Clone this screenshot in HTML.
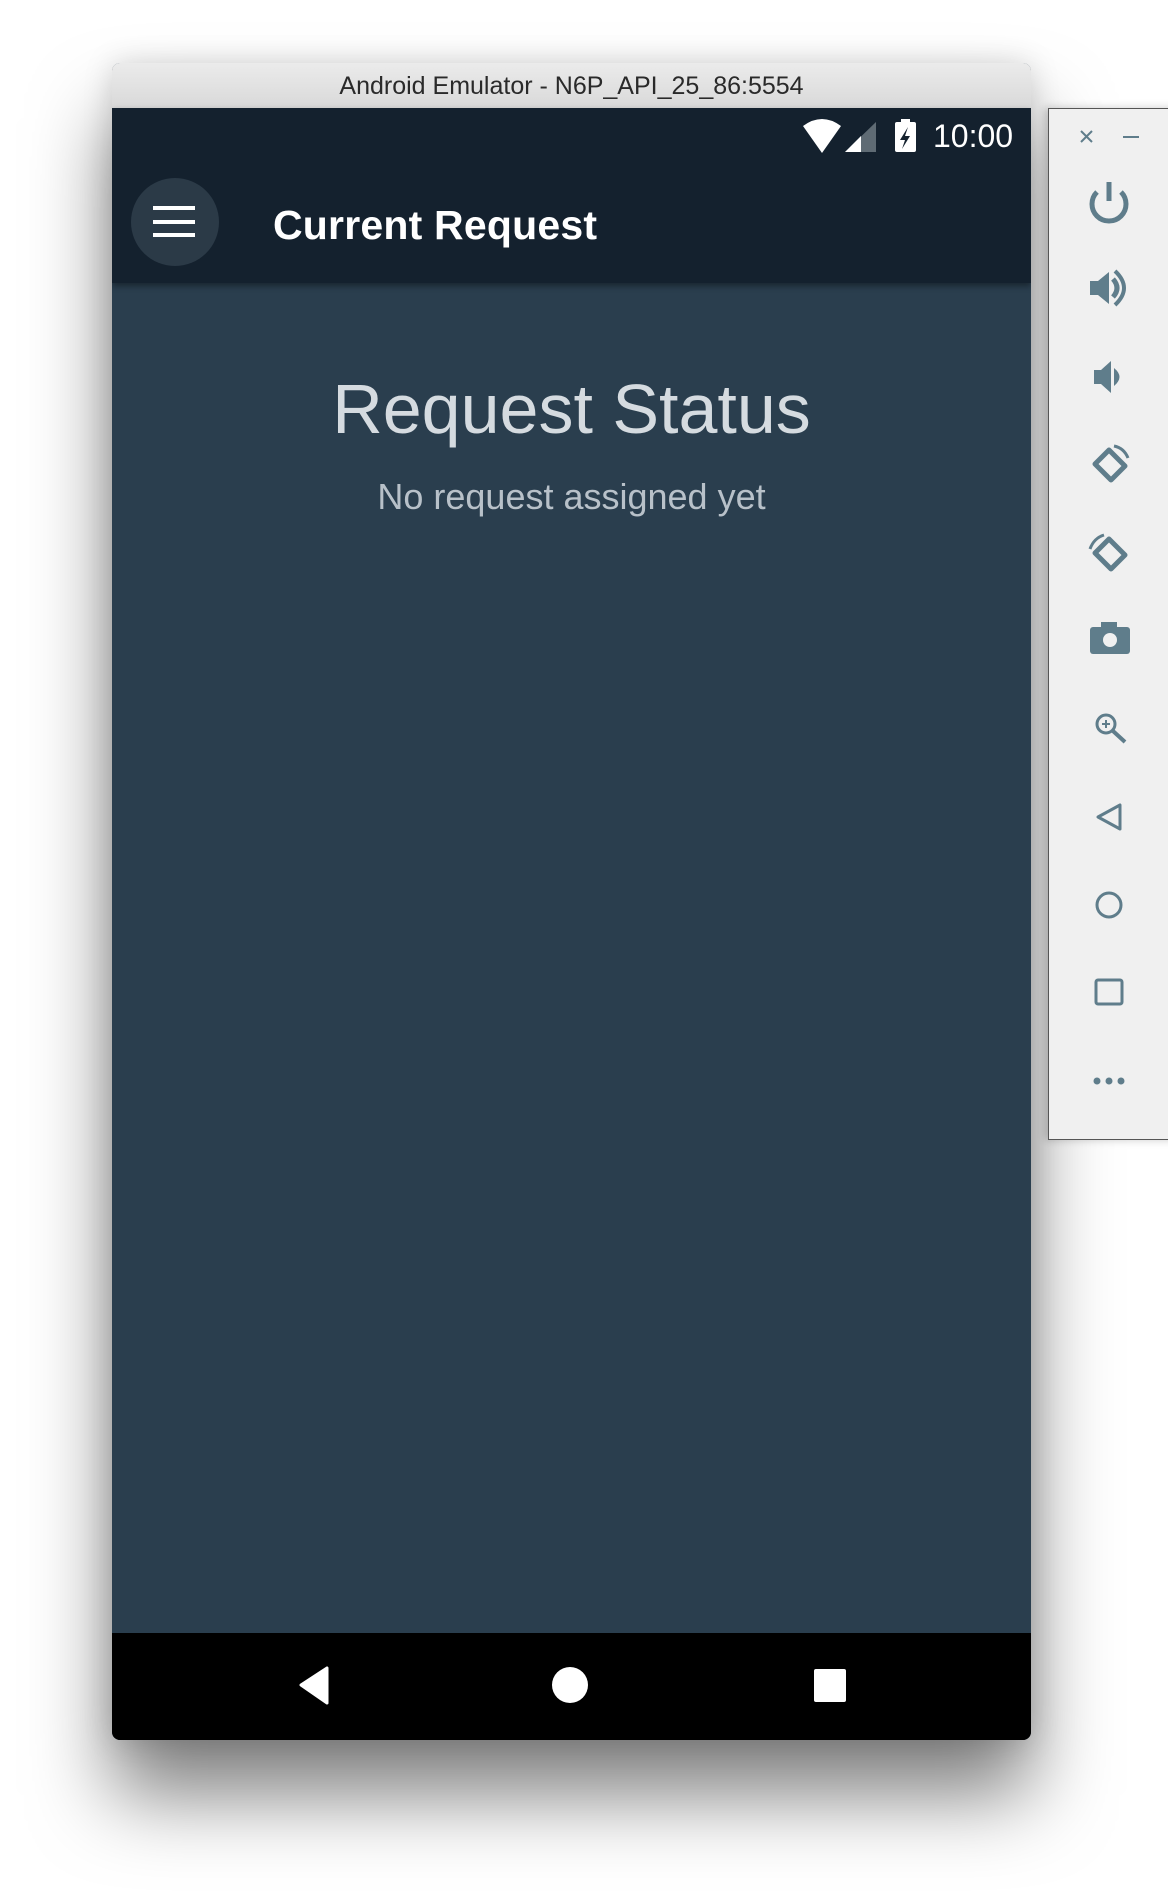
<!DOCTYPE html>
<html><head><style>
html,body{margin:0;padding:0;width:1168px;height:1900px;background:#fff;overflow:hidden;font-family:"Liberation Sans",sans-serif;position:relative}
.win{position:absolute;left:112px;top:63px;width:919px;height:1677px;border-radius:8px;box-shadow:0 55px 80px rgba(0,0,0,.5),0 0 30px rgba(0,0,0,.15);overflow:hidden;background:#2a3e4e}
.tb{position:absolute;left:0;top:0;width:100%;height:45px;background:linear-gradient(#ebebeb,#d9d9d9);border-bottom:1px solid #c4c4c4;text-align:center;font-size:25px;line-height:47px;color:#2a2a2a}
.sb{position:absolute;left:0;top:45px;width:100%;height:175px;background:#14212e;box-shadow:0 3px 6px rgba(0,0,0,.4)}
.nav{position:absolute;left:0;top:1570px;width:100%;height:107px;background:#000}
.side{position:absolute;left:1048px;top:108px;width:130px;height:1030px;background:#f0f0f0;border:1px solid #555;box-shadow:-3px 0 8px rgba(0,0,0,.2)}
svg{position:absolute;overflow:visible}
</style></head><body>
<div class="win">
 <div class="tb">Android Emulator - N6P_API_25_86:5554</div>
 <div class="sb">
  <svg style="left:0;top:0" width="919" height="175">
   <path d="M691 18 Q710 4 729 18 L710 45 Z" fill="#fff"/>
   <path d="M733 44 L764 14 L764 44 Z" fill="#5f6b74"/>
   <path d="M733 44 L749 28 L749 44 Z" fill="#fff"/>
   <rect x="783" y="14" width="21" height="30" rx="2" fill="#fff"/>
   <rect x="789" y="11" width="9" height="4" fill="#fff"/>
   <path d="M796 19 L788 32 L793 32 L790 41 L798 28 L793 28 Z" fill="#14212e"/>
   <text x="821" y="39" font-size="32" fill="#fff" font-family="Liberation Sans">10:00</text>
   <circle cx="63" cy="114" r="44" fill="#2b3a47"/>
   <rect x="41" y="98" width="42" height="4" fill="#fff"/>
   <rect x="41" y="112" width="42" height="4" fill="#fff"/>
   <rect x="41" y="125" width="42" height="4" fill="#fff"/>
   <text x="161" y="131" font-size="41" font-weight="bold" fill="#fff" font-family="Liberation Sans" textLength="324">Current Request</text>
  </svg>
 </div>
 <div style="position:absolute;left:0;top:306px;width:100%;text-align:center;font-size:70px;color:#d5dbe0;line-height:80px">Request Status</div>
 <div style="position:absolute;left:0;top:414px;width:100%;text-align:center;font-size:36px;color:#b8c1c9;line-height:40px">No request assigned yet</div>
 <div class="nav">
  <svg style="left:0;top:0" width="919" height="107">
   <path d="M215 35 L215 70 L189 52 Z" fill="#fff" stroke="#fff" stroke-width="3" stroke-linejoin="round"/>
   <circle cx="458" cy="52" r="18" fill="#fff"/>
   <rect x="702" y="36" width="32" height="33" rx="2" fill="#fff"/>
  </svg>
 </div>
</div>
<div class="side">
 <svg style="left:0;top:0" width="130" height="1030" fill="none" stroke="#5f7d8b">
  <g transform="translate(-1048,-108)">
   <path d="M1080 130 L1091 141 M1091 130 L1080 141" stroke-width="2"/>
   <path d="M1122 136 L1138 136" stroke-width="2"/>
   <path d="M1096 191 A17 17 0 1 0 1120 191" stroke-width="5"/>
   <path d="M1108 181 L1108 200" stroke-width="5"/>
   <path d="M1089 280 L1097 280 L1108 271 L1108 303 L1097 294 L1089 294 Z" fill="#5f7d8b" stroke="none"/>
   <path d="M1112 278 Q1120 287 1112 296" stroke-width="5"/>
   <path d="M1114 270 Q1132 287 1114 304" stroke-width="4"/>
   <path d="M1093 369 L1100 369 L1110 360 L1110 392 L1100 383 L1093 383 Z" fill="#5f7d8b" stroke="none"/>
   <path d="M1113 367 Q1124 376 1113 385" fill="#5f7d8b" stroke="none"/>
   <path d="M1094 463 L1108 449 L1124 465 L1110 479 Z" stroke-width="5" stroke-linejoin="round"/>
   <path d="M1113 445 Q1123 447 1127 457" stroke-width="3"/>
   <path d="M1094 552 L1108 538 L1124 554 L1110 568 Z" stroke-width="5" stroke-linejoin="round"/>
   <path d="M1089 548 Q1093 537 1103 534" stroke-width="3"/>
   <rect x="1089" y="626" width="40" height="27" rx="3" fill="#5f7d8b" stroke="none"/>
   <rect x="1100" y="621" width="16" height="6" fill="#5f7d8b" stroke="none"/>
   <circle cx="1109" cy="639" r="7" fill="#f0f0f0" stroke="none"/>
   <circle cx="1105" cy="723" r="9" stroke-width="3"/>
   <path d="M1112 730 L1124 741" stroke-width="4"/>
   <path d="M1101 723 L1109 723 M1105 719 L1105 727" stroke-width="2"/>
   <path d="M1119 804 L1119 828 L1097 816 Z" stroke-width="3" stroke-linejoin="round"/>
   <circle cx="1108" cy="904" r="12" stroke-width="3"/>
   <rect x="1095" y="979" width="26" height="24" rx="2" stroke-width="3"/>
   <circle cx="1096" cy="1080" r="3.5" fill="#5f7d8b" stroke="none"/>
   <circle cx="1108" cy="1080" r="3.5" fill="#5f7d8b" stroke="none"/>
   <circle cx="1120" cy="1080" r="3.5" fill="#5f7d8b" stroke="none"/>
  </g>
 </svg>
</div>
</body></html>
